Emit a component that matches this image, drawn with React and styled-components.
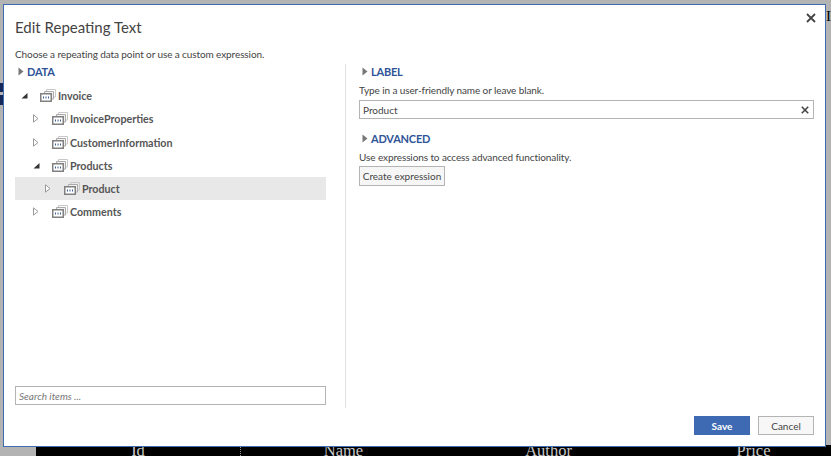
import React from 'react';
import styled, { createGlobalStyle } from 'styled-components';

const FONT = '"Lato", "Open Sans", sans-serif';

const Global = createGlobalStyle`
  html, body { margin: 0; padding: 0; width: 831px; height: 456px; overflow: hidden; background: #b3b3b3; }
  #root { width: 831px; height: 456px; }
  * { box-sizing: border-box; }
`;

const Page = styled.div`
  position: relative;
  width: 831px;
  height: 456px;
  background: #b3b3b3;
  overflow: hidden;
  display: flex;
  flex-direction: column;
  justify-content: flex-end;
`;

const TableHead = styled.div`
  margin-left: 36px;
  height: 11px;
  background: #000;
  display: grid;
  grid-template-columns: repeat(4, 205px);
  color: #c8c8c8;
  font: 16.5px/18px "Liberation Serif", serif;
  overflow: hidden;
`;

const HeadCell = styled.div`
  text-align: center;
  height: 18px;
  margin-top: -3px;
  border-right: ${p => (p.$divider ? '1px dotted #999' : '0')};
`;

const NavyMark = styled.div`
  position: absolute;
  left: 0;
  top: ${p => p.$top}px;
  width: 3px;
  height: ${p => p.$h}px;
  background: #14285a;
`;

const BehindGlyph = styled.div`
  position: absolute;
  left: 826px;
  top: 8px;
  font: 15px/16px "Liberation Serif", serif;
  color: #000;
`;

const Dialog = styled.div`
  position: absolute;
  left: 3px;
  top: 4px;
  width: 823px;
  height: 443px;
  background: #fff;
  border: 1px solid #3f6cb0;
  display: flex;
  flex-direction: column;
  padding: 0 11px;
  font-family: ${FONT};
  color: #444;
`;

const Close = styled.button`
  position: absolute;
  right: 9px;
  top: 8px;
  width: 10px;
  height: 10px;
  padding: 0;
  border: 0;
  background: none;
  display: flex;
`;

const Title = styled.h1`
  margin: 11px 0 0;
  font-size: 15px;
  line-height: 22px;
  font-weight: 400;
  color: #444;
`;

const Intro = styled.p`
  margin: 9px 0 0;
  font-size: 10px;
  letter-spacing: -0.1px;
  line-height: 14px;
  color: #444;
`;

const Columns = styled.div`
  display: flex;
  margin-top: 3px;
  height: 344px;
`;

const LeftPane = styled.div`
  width: 331px;
  display: flex;
  flex-direction: column;
  border-right: 1px solid #e2e2e2;
  padding-right: 19px;
`;

const RightPane = styled.div`
  flex: 1;
  padding-left: 13px;
  display: flex;
  flex-direction: column;
`;

const SectionHead = styled.div`
  display: flex;
  align-items: center;
  gap: 3px;
  margin-left: ${p => p.$indent}px;
  margin-top: ${p => p.$top || 0}px;
  height: 16px;
  padding-bottom: 2px;
  font-size: 11px;
  letter-spacing: -0.2px;
  font-weight: 700;
  color: #2f5597;
`;

const Tree = styled.div`
  flex: 1;
  display: flex;
  flex-direction: column;
  padding-top: 4px;
`;

const Row = styled.div`
  height: 23.25px;
  display: flex;
  align-items: center;
  padding-left: ${p => p.$indent}px;
  background: ${p => (p.$selected ? '#e8e8e8' : 'transparent')};
  font-size: 10.7px;
  font-weight: 700;
  color: #555;
`;

const Toggle = styled.span`
  width: 19px;
  display: flex;
  flex: none;
`;

const NodeIcon = styled.span`
  display: flex;
  flex: none;
  width: 18px;
`;

const SearchBox = styled.input`
  display: block;
  width: 311px;
  height: 19px;
  margin-bottom: 3px;
  border: 1px solid #b4b4b4;
  padding: 0 3px;
  font: italic 10px ${FONT};
  color: #666;
  outline: none;
  &::placeholder { color: #777; opacity: 1; }
`;

const Help = styled.p`
  margin: 3px 0 0;
  font-size: 10px;
  letter-spacing: -0.1px;
  line-height: 14px;
  color: #444;
`;

const InputWrap = styled.div`
  position: relative;
  margin-top: 3px;
  height: 19px;
  width: 455px;
`;

const TextInput = styled.input`
  display: block;
  width: 100%;
  height: 100%;
  border: 1px solid #b4b4b4;
  padding: 0 20px 0 3px;
  font: 10px ${FONT};
  color: #444;
  outline: none;
`;

const Clear = styled.span`
  position: absolute;
  right: 5px;
  top: 6px;
  display: flex;
`;

const ExprButton = styled.button`
  margin-top: 2px;
  width: 86px;
  height: 20px;
  padding: 0;
  border: 1px solid #b4b4b4;
  background: #f6f6f6;
  font: 10px ${FONT};
  color: #444;
  white-space: nowrap;
`;

const Footer = styled.div`
  display: flex;
  justify-content: flex-end;
  gap: 8px;
  margin-top: 8px;
`;

const FootButton = styled.button`
  width: 56px;
  height: 19px;
  padding: 0;
  border: 1px solid ${p => (p.$primary ? '#3d6ab3' : '#b4b4b4')};
  background: ${p => (p.$primary ? '#3d6ab3' : '#f7f7f7')};
  color: ${p => (p.$primary ? '#fff' : '#444')};
  font: ${p => (p.$primary ? 700 : 400)} 10px ${FONT};
`;

const Closed = () => (
  <svg width="6" height="9" viewBox="0 0 6 9"><path d="M.5.8 5 4.5.5 8.2z" fill="#fff" stroke="#999" /></svg>
);
const Solid = () => (
  <svg width="6" height="9" viewBox="0 0 6 9"><path d="M.5.5 5.5 4.5.5 8.5z" fill="#777" /></svg>
);
const Open = () => (
  <svg width="7" height="9" viewBox="0 0 7 9"><path d="M6.5 2v5.5H.5z" fill="#333" /></svg>
);
const Cross = ({ size, w }) => (
  <svg width={size} height={size} viewBox="0 0 10 10"><path d="M1 1l8 8M9 1l-8 8" stroke="#444" strokeWidth={w} fill="none" /></svg>
);
const Stack = () => (
  <svg width="16" height="13" viewBox="0 0 16 13">
    <path d="M6.5 2V.5h9v7.5H14" fill="none" stroke="#c8c8c8" />
    <path d="M4.5 4V2.5h9v7.5H12" fill="#f2f2f2" stroke="#aaa" />
    <rect x=".75" y="4.75" width="10.5" height="7.5" fill="#fff" stroke="#808080" strokeWidth="1.5" />
    <path d="M3 7.5h1v2H3zM5.5 7.5h1v2h-1zM8 7.5h1v2H8z" fill="#3d5f99" />
  </svg>
);

const nodes = [
  { name: 'Invoice', indent: 6, open: true },
  { name: 'InvoiceProperties', indent: 18 },
  { name: 'CustomerInformation', indent: 18 },
  { name: 'Products', indent: 18, open: true },
  { name: 'Product', indent: 30, selected: true },
  { name: 'Comments', indent: 18 },
];

export default function App() {
  return (
    <Page>
      <Global />
      <NavyMark $top={83} $h={9} />
      <NavyMark $top={95} $h={10} />
      <BehindGlyph>I</BehindGlyph>
      <TableHead>
        <HeadCell $divider>Id</HeadCell>
        <HeadCell>Name</HeadCell>
        <HeadCell>Author</HeadCell>
        <HeadCell>Price</HeadCell>
      </TableHead>
      <Dialog>
        <Close aria-label="Close"><Cross size={10} w={1.8} /></Close>
        <Title>Edit Repeating Text</Title>
        <Intro>Choose a repeating data point or use a custom expression.</Intro>
        <Columns>
          <LeftPane>
            <SectionHead $indent={3}><Solid />DATA</SectionHead>
            <Tree>
              {nodes.map(n => (
                <Row key={n.name} $indent={n.indent} $selected={n.selected}>
                  <Toggle>{n.open ? <Open /> : <Closed />}</Toggle>
                  <NodeIcon><Stack /></NodeIcon>
                  {n.name}
                </Row>
              ))}
            </Tree>
            <SearchBox placeholder="Search items ..." readOnly />
          </LeftPane>
          <RightPane>
            <SectionHead $indent={3}><Solid />LABEL</SectionHead>
            <Help>Type in a user-friendly name or leave blank.</Help>
            <InputWrap>
              <TextInput defaultValue="Product" />
              <Clear><Cross size={8} w={2} /></Clear>
            </InputWrap>
            <SectionHead $indent={3} $top={12}><Solid />ADVANCED</SectionHead>
            <Help>Use expressions to access advanced functionality.</Help>
            <ExprButton>Create expression</ExprButton>
          </RightPane>
        </Columns>
        <Footer>
          <FootButton $primary>Save</FootButton>
          <FootButton>Cancel</FootButton>
        </Footer>
      </Dialog>
    </Page>
  );
}
